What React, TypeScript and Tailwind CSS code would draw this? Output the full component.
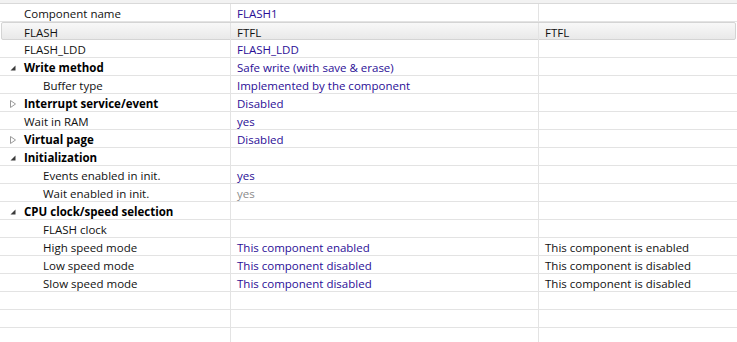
import React from "react";

type Row = {
  label: string;
  level: 0 | 1;
  bold?: boolean;
  arrow?: "open" | "closed";
  v1?: string;
  v1gray?: boolean;
  v2?: string;
  highlight?: boolean;
};

const rows: Row[] = [
  { label: "Component name", level: 0, v1: "FLASH1" },
  { label: "FLASH", level: 0, v1: "FTFL", v2: "FTFL", highlight: true },
  { label: "FLASH_LDD", level: 0, v1: "FLASH_LDD" },
  { label: "Write method", level: 0, bold: true, arrow: "open", v1: "Safe write (with save & erase)" },
  { label: "Buffer type", level: 1, v1: "Implemented by the component" },
  { label: "Interrupt service/event", level: 0, bold: true, arrow: "closed", v1: "Disabled" },
  { label: "Wait in RAM", level: 0, v1: "yes" },
  { label: "Virtual page", level: 0, bold: true, arrow: "closed", v1: "Disabled" },
  { label: "Initialization", level: 0, bold: true, arrow: "open" },
  { label: "Events enabled in init.", level: 1, v1: "yes" },
  { label: "Wait enabled in init.", level: 1, v1: "yes", v1gray: true },
  { label: "CPU clock/speed selection", level: 0, bold: true, arrow: "open" },
  { label: "FLASH clock", level: 1 },
  { label: "High speed mode", level: 1, v1: "This component enabled", v2: "This component is enabled" },
  { label: "Low speed mode", level: 1, v1: "This component disabled", v2: "This component is disabled" },
  { label: "Slow speed mode", level: 1, v1: "This component disabled", v2: "This component is disabled" },
  { label: "", level: 0 },
  { label: "", level: 0 },
  { label: "", level: 0 },
];

function Arrow({ kind }: { kind: "open" | "closed" }) {
  if (kind === "open") {
    return (
      <svg width="8" height="8" viewBox="0 0 8 8" className="block">
        <polygon points="6.5,1.5 6.5,6.5 1.5,6.5" fill="#3a3a3a" />
      </svg>
    );
  }
  return (
    <svg width="8" height="10" viewBox="0 0 8 10" className="block">
      <polygon points="1.5,1.5 6.5,5 1.5,8.5" fill="none" stroke="#9a9a9a" strokeWidth="1" />
    </svg>
  );
}

export default function App() {
  return (
    <div
      className="w-[737px] h-[342px] overflow-hidden bg-white text-[11.5px] text-[#1a1a1a]"
      style={{ fontFamily: '"Open Sans", "Noto Sans", sans-serif' }}
    >
      <div className="h-[4px] bg-[#f2f2f2] border-b border-[#d9d9d9]" />
      {rows.map((r, i) => (
        <div
          key={i}
          className={
            r.highlight
              ? "grid grid-cols-[229px_308px_1fr] h-[18px] items-center border border-[#d4d4d4] rounded-[2px] bg-gradient-to-b from-[#f8f8f8] to-[#e9e9e9] mx-[1px]"
              : "grid grid-cols-[231px_308px_1fr] h-[18px] items-center border-b border-[#e3e3e3]"
          }
        >
          <div className="h-full flex items-center pt-[1px] border-r border-[#e3e3e3] whitespace-nowrap">
            <div className={r.level === 1 ? "w-[43px] shrink-0" : r.highlight ? "w-[22px] shrink-0" : "w-[24px] shrink-0 flex items-center pl-[9px]"}>
              {r.level === 0 && r.arrow ? <Arrow kind={r.arrow} /> : null}
            </div>
            <span className={r.bold ? "font-bold text-black" : "text-[#111]"}>{r.label}</span>
          </div>
          <div
            className={
              "h-full flex items-center pt-[1px] pl-[6px] border-r border-[#e3e3e3] whitespace-nowrap " +
              (r.highlight ? "text-[#111]" : r.v1gray ? "text-[#8c8c8c]" : "text-[#2a0e96]")
            }
          >
            {r.v1}
          </div>
          <div className="h-full flex items-center pt-[1px] pl-[6px] whitespace-nowrap text-[#111]">{r.v2}</div>
        </div>
      ))}
    </div>
  );
}
